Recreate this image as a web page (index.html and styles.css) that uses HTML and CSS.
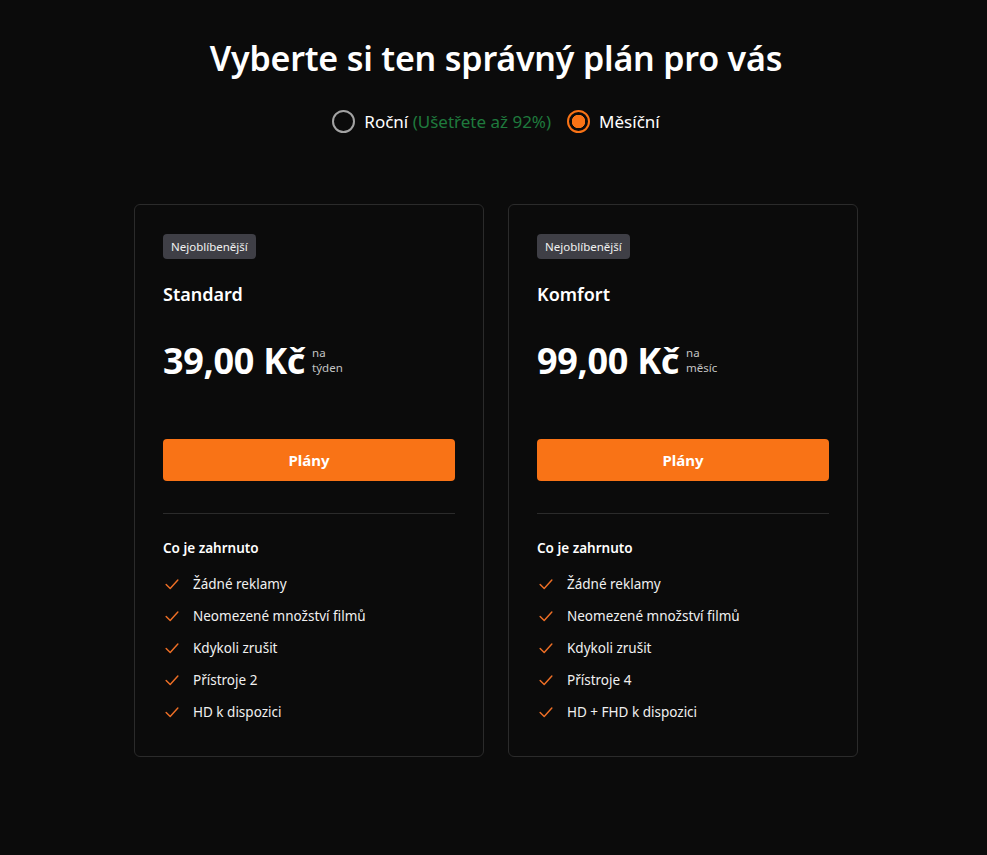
FILE: index.html
```html
<!DOCTYPE html>
<html lang="cs">
<head>
    <meta charset="UTF-8">
    <meta name="viewport" content="width=device-width, initial-scale=1.0">
    <title>Plány</title>
    <link rel="stylesheet" href="styles.css">
</head>
<body>
    <div class="page">
        <h1 class="title">Vyberte si ten správný plán pro vás</h1>

        <!-- Billing period -->
        <div class="period">
            <label class="period-option">
                <span class="radio"></span>
                <span>Roční <span class="save">(Ušetřete až 92%)</span></span>
            </label>
            <label class="period-option">
                <span class="radio checked"></span>
                <span>Měsíční</span>
            </label>
        </div>

        <!-- Plans -->
        <div class="plans">
            <div class="plan">
                <span class="badge">Nejoblíbenější</span>
                <h2 class="plan-name">Standard</h2>
                <div class="price">
                    <span class="amount">39,00 Kč</span>
                    <span class="per">na<br>týden</span>
                </div>
                <button class="button">Plány</button>
                <hr class="divider">
                <h3 class="features-title">Co je zahrnuto</h3>
                <ul class="features">
                    <li><svg class="check" viewBox="0 0 20 20"><path d="M3.5 10.5l4.5 4.5 8.5-9.5"/></svg>Žádné reklamy</li>
                    <li><svg class="check" viewBox="0 0 20 20"><path d="M3.5 10.5l4.5 4.5 8.5-9.5"/></svg>Neomezené množství filmů</li>
                    <li><svg class="check" viewBox="0 0 20 20"><path d="M3.5 10.5l4.5 4.5 8.5-9.5"/></svg>Kdykoli zrušit</li>
                    <li><svg class="check" viewBox="0 0 20 20"><path d="M3.5 10.5l4.5 4.5 8.5-9.5"/></svg>Přístroje 2</li>
                    <li><svg class="check" viewBox="0 0 20 20"><path d="M3.5 10.5l4.5 4.5 8.5-9.5"/></svg>HD k dispozici</li>
                </ul>
            </div>

            <div class="plan">
                <span class="badge">Nejoblíbenější</span>
                <h2 class="plan-name">Komfort</h2>
                <div class="price">
                    <span class="amount">99,00 Kč</span>
                    <span class="per">na<br>měsíc</span>
                </div>
                <button class="button">Plány</button>
                <hr class="divider">
                <h3 class="features-title">Co je zahrnuto</h3>
                <ul class="features">
                    <li><svg class="check" viewBox="0 0 20 20"><path d="M3.5 10.5l4.5 4.5 8.5-9.5"/></svg>Žádné reklamy</li>
                    <li><svg class="check" viewBox="0 0 20 20"><path d="M3.5 10.5l4.5 4.5 8.5-9.5"/></svg>Neomezené množství filmů</li>
                    <li><svg class="check" viewBox="0 0 20 20"><path d="M3.5 10.5l4.5 4.5 8.5-9.5"/></svg>Kdykoli zrušit</li>
                    <li><svg class="check" viewBox="0 0 20 20"><path d="M3.5 10.5l4.5 4.5 8.5-9.5"/></svg>Přístroje 4</li>
                    <li><svg class="check" viewBox="0 0 20 20"><path d="M3.5 10.5l4.5 4.5 8.5-9.5"/></svg>HD + FHD k dispozici</li>
                </ul>
            </div>
        </div>
    </div>
</body>
</html>
```

FILE: styles.css
```css
* {
    margin: 0;
    padding: 0;
    box-sizing: border-box;
}

body {
    background-color: #0b0b0b;
    color: #ffffff;
    font-family: 'Noto Sans', 'Open Sans', sans-serif;
    min-height: 100vh;
}

.page {
    display: flex;
    flex-direction: column;
    align-items: center;
    padding: 34px 0 0 5px;
}

.title {
    font-size: 34px;
    font-weight: 600;
    line-height: 48px;
    letter-spacing: -0.2px;
}

.period {
    display: flex;
    align-items: center;
    gap: 16px;
    margin-top: 28px;
    font-size: 17px;
}

.period-option {
    display: flex;
    align-items: center;
    gap: 9px;
    cursor: pointer;
}

.radio {
    width: 23px;
    height: 23px;
    border: 2px solid #a3a3a3;
    border-radius: 50%;
    display: inline-block;
}

.radio.checked {
    border: 2.5px solid #f97316;
    background: radial-gradient(circle, #f97316 0 6.5px, #0b0b0b 7px);
}

.save {
    color: #1f7a3d;
}

.plans {
    display: flex;
    gap: 24px;
    margin-top: 71px;
}

.plan {
    width: 350px;
    background-color: #0b0b0b;
    border: 1px solid #2b2b2b;
    border-radius: 6px;
    padding: 29px 28px 28px;
}

.badge {
    display: inline-block;
    background-color: #3f3f46;
    color: #f1f1f1;
    font-size: 11.5px;
    line-height: 25px;
    padding: 0 8px;
    border-radius: 4px;
}

.plan-name {
    font-size: 18px;
    font-weight: 600;
    margin-top: 22px;
    line-height: 26px;
}

.price {
    display: flex;
    align-items: flex-start;
    gap: 7px;
    margin-top: 33px;
    height: 99px;
}

.amount {
    font-size: 36px;
    font-weight: 700;
    line-height: 42px;
    letter-spacing: -0.3px;
}

.per {
    font-size: 11.5px;
    color: #c4c4c4;
    line-height: 15px;
    margin-top: 5px;
}

.button {
    display: block;
    width: 100%;
    height: 42px;
    background-color: #f97316;
    color: #ffffff;
    border: none;
    border-radius: 4px;
    font-family: inherit;
    font-size: 15px;
    font-weight: 700;
    cursor: pointer;
}

.divider {
    border: none;
    border-top: 1px solid #2b2b2b;
    margin: 32px 0 0;
}

.features-title {
    font-size: 13.5px;
    font-weight: 600;
    margin-top: 24px;
    line-height: 20px;
}

.features {
    list-style: none;
    margin-top: 10px;
}

.features li {
    display: flex;
    align-items: center;
    gap: 12px;
    font-size: 13.5px;
    line-height: 32px;
    color: #f1f1f1;
}

.check {
    width: 18px;
    height: 18px;
    fill: none;
    stroke: #ee6f26;
    stroke-width: 1.6;
    stroke-linecap: round;
    stroke-linejoin: round;
}
```
